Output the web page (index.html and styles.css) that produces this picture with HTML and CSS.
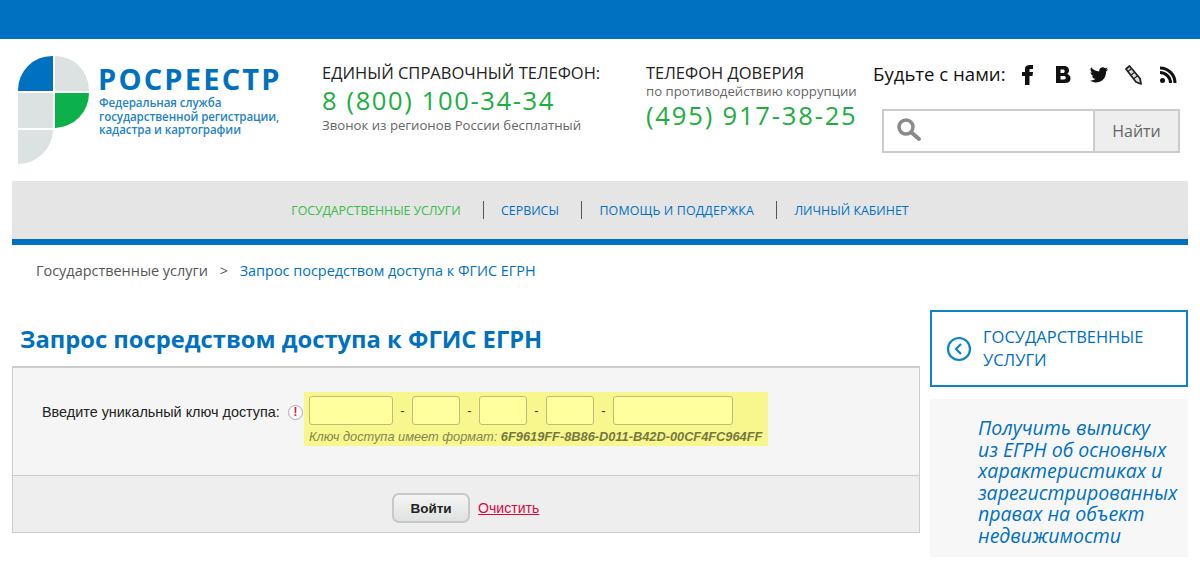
FILE: index.html
```html
<!DOCTYPE html>
<html lang="ru">
<head>
<meta charset="utf-8">
<title>Запрос посредством доступа к ФГИС ЕГРН</title>
<link rel="stylesheet" href="styles.css">
</head>
<body>
<div class="topbar"></div>
<header class="header">
  <div class="logo">
    <svg class="logo-mark" width="72" height="108" viewBox="0 0 72 108">
      <path d="M35 0V35H0V34A34 34 0 0 1 34 0Z" fill="#0070c0"/>
      <path d="M37 0A34 34 0 0 1 71 34V35H37Z" fill="#dce1e1"/>
      <rect x="0" y="37" width="35" height="35" fill="#dce1e1"/>
      <path d="M37 37H71A35 35 0 0 1 37 72Z" fill="#0db14b"/>
      <path d="M0 74H35A35 35 0 0 1 0 108Z" fill="#dce1e1"/>
    </svg>
    <div class="logo-text">
      <div class="logo-name">РОСРЕЕСТР</div>
      <div class="logo-sub">Федеральная служба<br>государственной регистрации,<br>кадастра и картографии</div>
    </div>
  </div>
  <div class="phone phone-main">
    <div class="phone-title">ЕДИНЫЙ СПРАВОЧНЫЙ ТЕЛЕФОН:</div>
    <div class="phone-num">8 (800) 100-34-34</div>
    <div class="phone-note">Звонок из регионов России бесплатный</div>
  </div>
  <div class="phone phone-trust">
    <div class="phone-title">ТЕЛЕФОН ДОВЕРИЯ</div>
    <div class="phone-note tight">по противодействию коррупции</div>
    <div class="phone-num">(495) 917-38-25</div>
  </div>
  <div class="tools">
    <div class="social">
      <span class="social-label">Будьте с нами:</span>
      <span class="ico-cell"><svg width="14" height="22" viewBox="0 0 14 22"><path d="M4 21V12H1V8H4V5C4 2 6 1 8.500 1H12V5H9.500C8.500 5 8.500 5.500 8.500 6V8H12L11.500 12H8.500V21Z" fill="#111"/></svg></span>
      <span class="ico-cell"><svg width="16" height="20" viewBox="0 0 16 20"><path fill-rule="evenodd" d="M1 1H9C13 1 14 3.500 14 5.500C14 7.500 13 8.500 12 9C14 9.500 15.500 11 15.500 13.500C15.500 16.500 13.500 18 10 18H1ZM5.500 4.500V8H8C9 8 9.700 7.300 9.700 6.200C9.700 5.100 9 4.500 8 4.500ZM5.500 11V14.500H8.500C10 14.500 10.800 13.800 10.800 12.700C10.800 11.600 10 11 8.500 11Z" fill="#111"/></svg></span>
      <span class="ico-cell"><svg width="21" height="18" viewBox="0 0 24 20"><path d="M23 3C22 3.500 21.300 3.600 20.500 3.700C21.300 3.200 22 2.400 22.300 1.400C21.500 1.900 20.600 2.200 19.700 2.400C17 -0.500 12 1.800 12.900 6C9.200 5.800 5.800 4 3.500 1.200C2.300 3.300 2.900 6 5 7.300C4.200 7.300 3.500 7.100 2.900 6.700C2.900 8.900 4.400 10.700 6.500 11.200C5.900 11.400 5.200 11.400 4.500 11.300C5.100 13.100 6.800 14.400 8.800 14.400C6.800 16 4.300 16.700 1.800 16.400C9 21 20.700 18 20.700 6C21.500 5.300 22.400 4.200 23 3Z" fill="#111"/></svg></span>
      <span class="ico-cell"><svg width="20" height="22" viewBox="0 0 20 22"><path d="M3 5L6.500 2L17 14.500L18 20L13 18Z" fill="#ddd" stroke="#222" stroke-width="1.800" stroke-linejoin="round"/><path d="M5 7.500L8.500 4.500M8 11L12 8M11 14.500L15 11.500" stroke="#222" stroke-width="1.200"/></svg></span>
      <span class="ico-cell"><svg width="18" height="18" viewBox="0 0 18 18"><circle cx="3.500" cy="14.500" r="2.500" fill="#111"/><path d="M1 6.500A10.500 10.500 0 0 1 11.500 17" fill="none" stroke="#111" stroke-width="3"/><path d="M1 2A15 15 0 0 1 16 17" fill="none" stroke="#111" stroke-width="3"/></svg></span>
    </div>
    <div class="search">
      <div class="search-field">
        <svg width="26" height="26" viewBox="0 0 26 26"><circle cx="10" cy="10" r="7" fill="none" stroke="#8a8a8a" stroke-width="3.500"/><path d="M15.500 15.500L23 22" stroke="#8a8a8a" stroke-width="4" stroke-linecap="round"/></svg>
      </div>
      <div class="search-btn">Найти</div>
    </div>
  </div>
</header>
<nav class="nav">
  <a class="nav-link active">ГОСУДАРСТВЕННЫЕ УСЛУГИ</a>
  <span class="nav-sep"></span>
  <a class="nav-link">СЕРВИСЫ</a>
  <span class="nav-sep"></span>
  <a class="nav-link wide">ПОМОЩЬ И ПОДДЕРЖКА</a>
  <span class="nav-sep"></span>
  <a class="nav-link">ЛИЧНЫЙ КАБИНЕТ</a>
</nav>
<div class="crumbs">
  <span class="crumb-root">Государственные услуги</span>
  <span class="crumb-arrow">&gt;</span>
  <span class="crumb-cur">Запрос посредством доступа к ФГИС ЕГРН</span>
</div>
<div class="main">
  <main class="content">
    <h1 class="title">Запрос посредством доступа к ФГИС ЕГРН</h1>
    <div class="panel">
      <div class="form-row">
        <label class="key-label">Введите уникальный ключ доступа:</label>
        <span class="req"><span class="req-mark">!</span></span>
        <div class="key-box">
          <div class="key-inputs">
            <span class="inp w84"></span><span class="dash">-</span>
            <span class="inp w48"></span><span class="dash">-</span>
            <span class="inp w48"></span><span class="dash">-</span>
            <span class="inp w48"></span><span class="dash">-</span>
            <span class="inp w120"></span>
          </div>
          <div class="key-hint">Ключ доступа имеет формат: <b>6F9619FF-8B86-D011-B42D-00CF4FC964FF</b></div>
        </div>
      </div>
      <div class="form-actions">
        <button class="enter" type="button">Войти</button>
        <a class="clear">Очистить</a>
      </div>
    </div>
  </main>
  <aside class="side">
    <div class="back">
      <svg width="26" height="26" viewBox="0 0 26 26"><circle cx="13" cy="13" r="11" fill="none" stroke="#0a84c6" stroke-width="2.200"/><path d="M15 8L10 13L15 18" fill="none" stroke="#0a84c6" stroke-width="2.200"/></svg>
      <span class="back-text">ГОСУДАРСТВЕННЫЕ<br>УСЛУГИ</span>
    </div>
    <div class="promo">Получить выписку<br>из ЕГРН об основных<br>характеристиках и<br>зарегистрированных<br>правах на объект<br>недвижимости</div>
  </aside>
</div>
</body>
</html>
```
FILE: styles.css
```css
* { box-sizing: border-box; }
html, body { margin: 0; padding: 0; }
body { width: 1200px; height: 582px; overflow: hidden; background: #fff; font-family: "Open Sans", sans-serif; color: #222; }
.topbar { height: 39px; background: #0070c0; }
.header { height: 142px; display: flex; align-items: flex-start; }
.logo { width: 322px; padding: 17px 0 0 18px; display: flex; gap: 9px; }
.logo-name { font-weight: 700; font-size: 29px; line-height: 30px; letter-spacing: 2.200px; color: #0070c0; margin: 8px 0 0 -1px; white-space: nowrap; }
.logo-sub { font-size: 11.600px; line-height: 13.500px; color: #1f83c4; margin-top: 2px; font-weight: 600; white-space: nowrap; letter-spacing: -0.1px; }
.phone-main { width: 324px; padding-top: 23px; }
.phone-trust { width: 227px; padding-top: 23px; }
.phone-title { font-size: 16.500px; line-height: 22px; color: #222; white-space: nowrap; }
.phone-num { font-size: 25.600px; line-height: 33px; color: #1cae3f; letter-spacing: 1.600px; white-space: nowrap; }
.phone-trust .phone-num { letter-spacing: 1.800px; }
.phone-note { font-size: 13.200px; line-height: 16px; color: #666; white-space: nowrap; }
.phone-note.tight { line-height: 15px; }
.tools { flex: 1; padding-top: 21px; }
.social { display: flex; align-items: center; height: 30px; }
.social-label { font-size: 18.600px; color: #111; margin: 0 5px 4px 0; white-space: nowrap; }
.ico-cell { width: 35px; flex: none; display: flex; justify-content: center; align-items: center; }
.search { display: flex; width: 298px; height: 44px; margin: 19px 0 0 9px; border: 2px solid #ccc; }
.search-field { width: 209px; padding: 6px 0 0 12px; background: #fff; }
.search-btn { flex: 1; background: #eee; border-left: 2px solid #ccc; color: #666; font-size: 16px; line-height: 40px; text-align: center; }
.nav { margin: 0 12px; height: 64px; background: #e5e5e5; border-bottom: 6px solid #0070c0; display: flex; justify-content: center; align-items: center; }
.nav-link { font-size: 12.400px; color: #0070c0; white-space: nowrap; }
.nav-link.active { color: #38bc4c; letter-spacing: -0.1px; }
.nav-link.wide { letter-spacing: 0.15px; }
.nav-sep { width: 1px; height: 18px; background: #555; margin: 0 17px 0 22.500px; }
.crumbs { height: 52px; padding: 16px 0 0 36px; font-size: 14.450px; line-height: 20px; white-space: nowrap; }
.crumb-root { color: #555; }
.crumb-arrow { color: #555; margin: 0 8px; }
.crumb-cur { color: #0070c0; }
.main { display: flex; align-items: flex-start; }
.content { width: 930px; padding: 25px 0 0 12px; }
.title { margin: 0 0 0 8px; font-size: 23.750px; line-height: 34px; font-weight: 700; color: #0070c0; white-space: nowrap; }
.panel { width: 908px; height: 167px; margin-top: 10px; border: 1px solid #ccc; border-top: 2px solid #ccc; background: #f5f5f5; font-family: "Liberation Sans", Arial, sans-serif; display: flex; flex-direction: column; }
.form-row { height: 108px; flex: none; display: flex; align-items: flex-start; padding-top: 24px; border-bottom: 1px solid #ccc; }
.key-label { font-size: 14.400px; line-height: 40px; margin-left: 29px; width: 245px; color: #222; white-space: nowrap; }
.req { width: 15px; height: 15px; margin: 13px 1px 0 1px; border-radius: 50%; background: #fff; border: 1px solid #aaa; display: flex; align-items: center; justify-content: center; flex: none; }
.req-mark { color: #e8143c; font-size: 12px; font-weight: 700; line-height: 13px; }
.key-box { width: 464px; height: 54px; padding: 4px 5px; background: #f7f78e; }
.key-inputs { display: flex; align-items: center; }
.inp { height: 29px; background: #ffff9e; border: 1px solid #bdbd78; border-radius: 3px; display: block; }
.w84 { width: 84px; }
.w48 { width: 48px; }
.w120 { width: 120px; }
.dash { width: 19px; text-align: center; font-size: 13px; color: #333; }
.key-hint { margin-top: 4px; font-size: 12.800px; line-height: 15px; font-style: italic; color: #85854f; white-space: nowrap; }
.key-hint b { color: #77773f; }
.form-actions { flex: 1; background: #eee; display: flex; align-items: center; padding: 8px 0 0 379px; gap: 8px; }
.enter { width: 78px; height: 30px; padding: 0; border: 2px solid #c8c8c8; border-radius: 7px; background: linear-gradient(#f4f4f4, #dfe2e2); font-family: "Liberation Sans", Arial, sans-serif; font-size: 13.500px; font-weight: 700; color: #222; }
.clear { font-size: 14.100px; color: #d9083f; text-decoration: underline; }
.side { width: 258px; margin-top: 13px; }
.back { height: 77px; border: 2px solid #0a84c6; display: flex; align-items: center; padding-left: 14px; gap: 11px; }
.back-text { color: #0070c0; font-size: 16.500px; line-height: 23px; white-space: nowrap; margin-bottom: 2px; }
.promo { margin-top: 12px; height: 158px; background: #f7f7f7; padding: 18px 0 0 48px; font-size: 19.500px; line-height: 21.600px; font-style: italic; color: #0070c0; white-space: nowrap; }
```
